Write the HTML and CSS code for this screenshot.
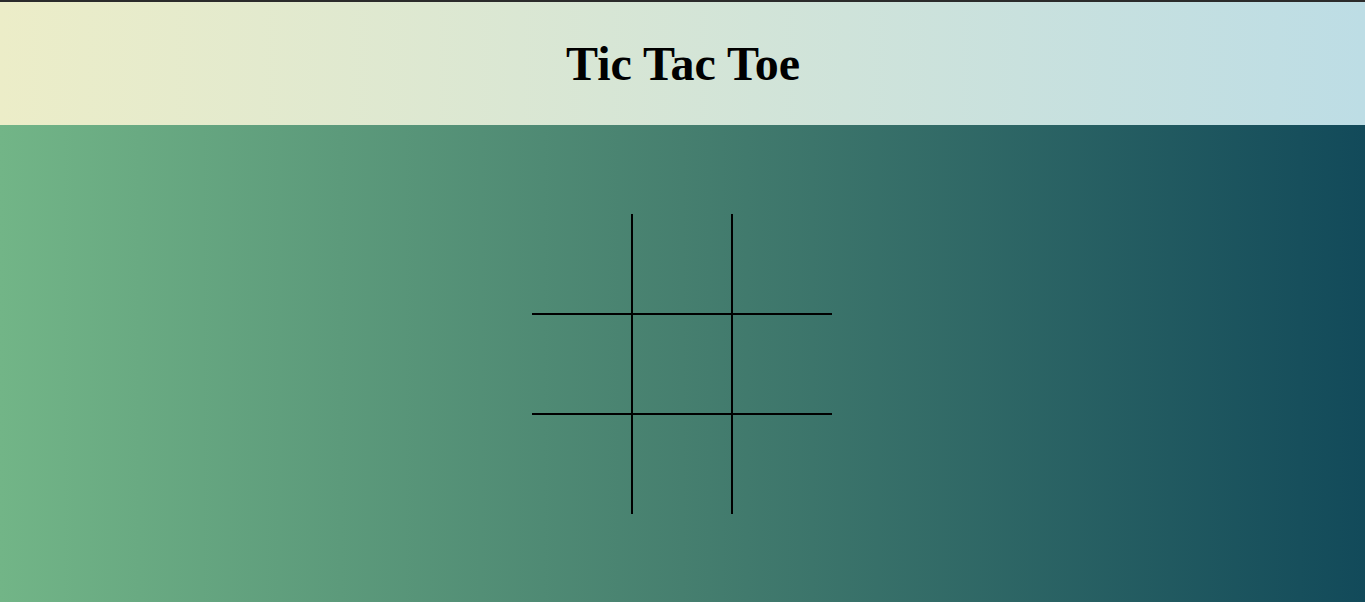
FILE: index.html
```html
<!DOCTYPE html>
<html lang="en">
<head>
<meta charset="utf-8">
<title>Tic Tac Toe</title>
<link rel="stylesheet" href="styles.css">
</head>
<body>
<div class="page">
  <header class="header">
    <h1 class="title">Tic Tac Toe</h1>
  </header>
  <main class="main">
    <div class="board">
      <div class="cell"></div>
      <div class="cell"></div>
      <div class="cell"></div>
      <div class="cell"></div>
      <div class="cell"></div>
      <div class="cell"></div>
      <div class="cell"></div>
      <div class="cell"></div>
      <div class="cell"></div>
    </div>
  </main>
</div>
</body>
</html>
```

FILE: styles.css
```css
html, body {
  margin: 0;
  padding: 0;
  height: 100%;
}

body {
  font-family: "Liberation Serif", "Times New Roman", serif;
  border-top: 2px solid #2b2b2b;
  box-sizing: border-box;
}

.page {
  display: flex;
  flex-direction: column;
  height: 100%;
}

.header {
  height: 123px;
  flex: 0 0 auto;
  display: flex;
  align-items: center;
  justify-content: center;
  background: linear-gradient(to right, #ecedc8, #bddde5);
}

.title {
  margin: 0 0 0 1px;
  font-size: 48px;
  font-weight: bold;
  color: #000;
  line-height: 1;
}

.main {
  flex: 1 1 auto;
  display: flex;
  align-items: center;
  justify-content: center;
  background: linear-gradient(to right, #72b587, #467f6f 50%, #124a5a);
}

.board {
  display: grid;
  grid-template-columns: repeat(3, 100px);
  grid-template-rows: repeat(3, 100px);
  margin-right: 1px;
}

.cell {
  box-sizing: border-box;
  border: 1px solid #000;
}

.cell:nth-child(-n+3) { border-top: none; }
.cell:nth-child(n+7) { border-bottom: none; }
.cell:nth-child(3n+1) { border-left: none; }
.cell:nth-child(3n) { border-right: none; }
```
